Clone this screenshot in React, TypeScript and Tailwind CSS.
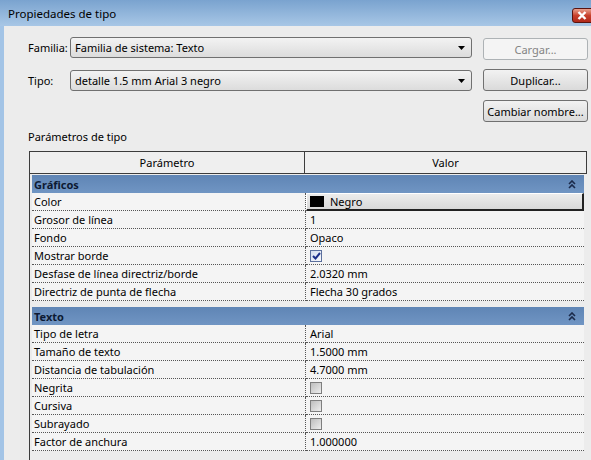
import React from 'react';

type Row = { label: string; value?: string; kind?: 'text' | 'color' | 'check' | 'uncheck' };

const graficos: Row[] = [
  { label: 'Color', kind: 'color', value: 'Negro' },
  { label: 'Grosor de línea', value: '1' },
  { label: 'Fondo', value: 'Opaco' },
  { label: 'Mostrar borde', kind: 'check' },
  { label: 'Desfase de línea directriz/borde', value: '2.0320 mm' },
  { label: 'Directriz de punta de flecha', value: 'Flecha 30 grados' },
];

const texto: Row[] = [
  { label: 'Tipo de letra', value: 'Arial' },
  { label: 'Tamaño de texto', value: '1.5000 mm' },
  { label: 'Distancia de tabulación', value: '4.7000 mm' },
  { label: 'Negrita', kind: 'uncheck' },
  { label: 'Cursiva', kind: 'uncheck' },
  { label: 'Subrayado', kind: 'uncheck' },
  { label: 'Factor de anchura', value: '1.000000' },
];

const Combo: React.FC<{ label: string; value: string }> = ({ label, value }) => (
  <div className="flex items-center h-[21px]">
    <span className="w-[42px] whitespace-nowrap">{label}</span>
    <div className="flex items-center w-[402px] h-[21px] rounded-[3px] border border-[#707070] bg-gradient-to-b from-[#f3f3f3] to-[#dcdcdc] pl-[4px] pr-[6px]">
      <span className="flex-1">{value}</span>
      <svg width="7" height="4" viewBox="0 0 7 4">
        <path d="M0 0 L7 0 L3.5 4 Z" fill="#000" />
      </svg>
    </div>
  </div>
);

const Button: React.FC<{ label: string; disabled?: boolean }> = ({ label, disabled }) =>
  disabled ? (
    <div className="flex items-center justify-center whitespace-nowrap w-[105px] h-[22px] rounded-[3px] border border-[#adb2b5] bg-[#f4f4f4] text-[#838383]">
      {label}
    </div>
  ) : (
    <div className="flex items-center justify-center whitespace-nowrap w-[105px] h-[22px] rounded-[3px] border border-[#707070] bg-gradient-to-b from-[#f2f2f2] to-[#dadada]">
      {label}
    </div>
  );

const Chevrons = () => (
  <svg width="8" height="9" viewBox="0 0 8 9">
    <path d="M1 4 L4 1 L7 4 M1 8 L4 5 L7 8" fill="none" stroke="#1b2a4a" strokeWidth="1.6" />
  </svg>
);

const Band: React.FC<{ title: string }> = ({ title }) => (
  <div className="flex items-center h-[18px] bg-gradient-to-b from-[#5f85b5] to-[#7095c3] pl-[2px] pr-[8px] font-bold text-[#0d1a33]">
    <span className="flex-1">{title}</span>
    <Chevrons />
  </div>
);

const ValueCell: React.FC<{ row: Row }> = ({ row }) => {
  if (row.kind === 'color') {
    return (
      <div className="flex-1 flex items-center h-full border-t border-l border-[#ffffff] border-r-2 border-b-2 border-r-[#222] border-b-[#222] bg-gradient-to-b from-[#ececec] to-[#d8d8d8] pl-[3px]">
        <span className="w-[14px] h-[11px] bg-black mr-[6px]" />
        <span>{row.value}</span>
      </div>
    );
  }
  if (row.kind === 'check' || row.kind === 'uncheck') {
    const on = row.kind === 'check';
    return (
      <div className="flex-1 flex items-center h-full pl-[4px] border-b border-dotted border-[#555]">
        <span
          className={
            on
              ? 'flex items-center justify-center w-[12px] h-[12px] border border-[#5b6f9c] bg-gradient-to-br from-[#d3dcee] to-[#f7f9fd]'
              : 'w-[12px] h-[12px] border border-[#7e7e7e] bg-gradient-to-br from-[#bdbdbd] to-[#eeeeee]'
          }
        >
          {on && (
            <svg width="9" height="8" viewBox="0 0 9 8">
              <path d="M1 4 L3.5 6.5 L8 1" fill="none" stroke="#1c2f8a" strokeWidth="2" />
            </svg>
          )}
        </span>
      </div>
    );
  }
  return (
    <div className="flex-1 flex items-center h-full pl-[4px] border-b border-dotted border-[#555]">
      {row.value}
    </div>
  );
};

const ParamRow: React.FC<{ row: Row }> = ({ row }) => (
  <div className="flex h-[18px] bg-[#f4f4f4]">
    <div className="w-[274px] flex items-center pl-[2px] border-b border-r border-dotted border-[#555]">
      {row.label}
    </div>
    <ValueCell row={row} />
  </div>
);

export default function App() {
  return (
    <div
      className="w-[591px] h-[460px] overflow-hidden flex flex-col bg-[#a3c4e6] text-[11px] leading-none text-black"
      style={{ fontFamily: '"Segoe UI", "Noto Sans", sans-serif' }}
    >
      <div className="relative h-[26px] shrink-0 flex items-center pl-[8px] bg-gradient-to-b from-[#7aa3cf] to-[#a8c7e6]">
        <span className="text-[11.5px] pt-[2px]">Propiedades de tipo</span>
        <div className="absolute right-[-8px] top-[8px] w-[27px] h-[15px] rounded-[3px] border border-[#5a1410] bg-gradient-to-b from-[#e8a08e] via-[#c8402c] to-[#b0281a] flex items-center pl-[4px]">
          <svg width="10" height="9" viewBox="0 0 10 9">
            <path d="M1.5 1 L8.5 8 M8.5 1 L1.5 8" stroke="#fff" strokeWidth="2.4" />
          </svg>
        </div>
      </div>
      <div className="flex-1 ml-[4px] bg-[#ececec] pl-[24px] pt-[11px] flex flex-col">
        <div className="flex">
          <div className="flex flex-col gap-[12px]">
            <Combo label="Familia:" value="Familia de sistema: Texto" />
            <Combo label="Tipo:" value="detalle 1.5 mm Arial 3 negro" />
          </div>
          <div className="ml-[11px] mt-[1px] flex flex-col gap-[9px]">
            <Button label="Cargar..." disabled />
            <Button label="Duplicar..." />
            <Button label="Cambiar nombre..." />
          </div>
        </div>
        <div className="mt-[6px] h-[16px] flex items-center">Parámetros de tipo</div>
        <div className="mt-[7px] ml-[1px] w-[558px] flex-1 flex flex-col">
          <div className="flex h-[23px] border border-[#3c3c3c] bg-[#efefef]">
            <div className="w-[275px] flex items-center justify-center border-r border-[#3c3c3c]">Parámetro</div>
            <div className="flex-1 flex items-center justify-center">Valor</div>
          </div>
          <div className="flex-1 border-l border-[#3c3c3c] pl-[2px] pr-[3px] pt-[1px]">
            <Band title="Gráficos" />
            {graficos.map((r, i) => (
              <ParamRow key={i} row={r} />
            ))}
            <div className="h-[6px]" />
            <Band title="Texto" />
            {texto.map((r, i) => (
              <ParamRow key={i} row={r} />
            ))}
          </div>
        </div>
      </div>
    </div>
  );
}
